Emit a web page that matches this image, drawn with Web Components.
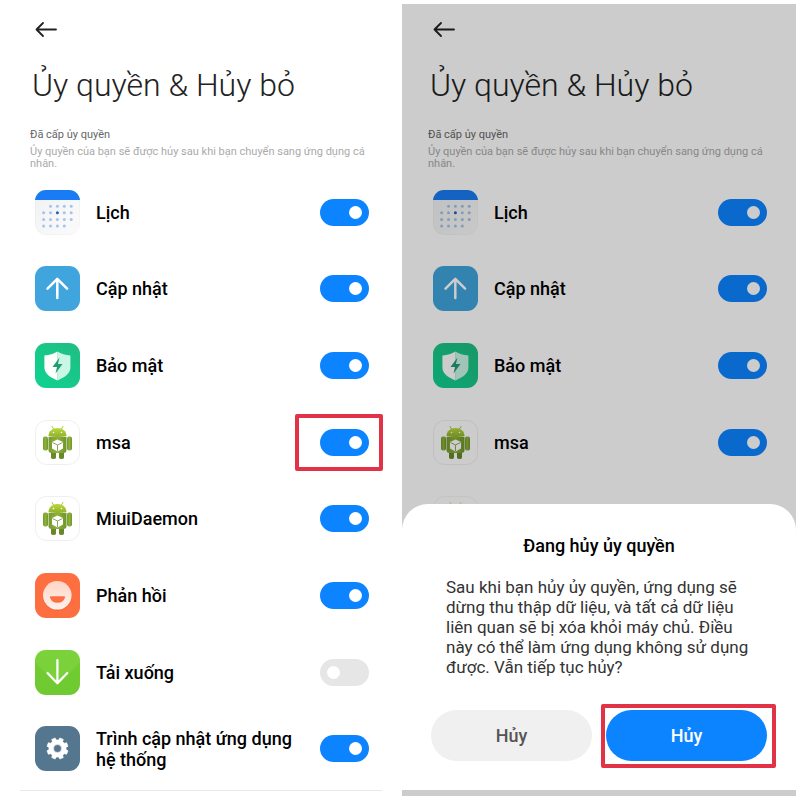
<!DOCTYPE html>
<html lang="vi">
<head>
<meta charset="utf-8">
<meta name="viewport" content="width=device-width, initial-scale=1">
<title>Ủy quyền &amp; Hủy bỏ</title>
<style>
  body { margin: 0; background: #fff; font-family: Roboto, "Noto Sans", sans-serif; color: #000; }
  .pair { display: grid; grid-template-columns: 1fr 1fr; gap: 4px; padding: 4px; min-height: 100vh; box-sizing: border-box; }
</style>
</head>
<body>
<main class="pair">
  <permission-screen divider>
    <app-row name="Lịch" icon="calendar" checked></app-row>
    <app-row name="Cập nhật" icon="update" checked></app-row>
    <app-row name="Bảo mật" icon="security" checked></app-row>
    <app-row name="msa" icon="android" checked marked></app-row>
    <app-row name="MiuiDaemon" icon="android" checked></app-row>
    <app-row name="Phản hồi" icon="feedback" checked></app-row>
    <app-row name="Tải xuống" icon="download"></app-row>
    <app-row name="Trình cập nhật ứng dụng hệ thống" icon="gear" checked></app-row>
  </permission-screen>
  <permission-screen dimmed>
    <app-row name="Lịch" icon="calendar" checked></app-row>
    <app-row name="Cập nhật" icon="update" checked></app-row>
    <app-row name="Bảo mật" icon="security" checked></app-row>
    <app-row name="msa" icon="android" checked></app-row>
    <app-icon class="peek" name="android"></app-icon>
    <confirm-sheet slot="sheet" heading="Đang hủy ủy quyền">
      Sau khi bạn hủy ủy quyền, ứng dụng sẽ dừng thu thập dữ liệu, và tất cả dữ liệu liên quan sẽ bị xóa khỏi máy chủ. Điều này có thể làm ứng dụng không sử dụng được. Vẫn tiếp tục hủy?
      <pill-button slot="actions">Hủy</pill-button>
      <pill-button slot="actions" primary marked>Hủy</pill-button>
    </confirm-sheet>
  </permission-screen>
</main>
<script>
const gearPath = () => {
  let d = '';
  for (let i = 0; i < 8; i++) {
    [[-15, 8.6], [-10, 10.8], [10, 10.8], [15, 8.6]].forEach(([off, r], k) => {
      const a = (i * 45 + 22.5 + off) * Math.PI / 180;
      d += (i || k ? 'L' : 'M') + (22.5 + r * Math.cos(a)).toFixed(2) + ' ' + (22.5 + r * Math.sin(a)).toFixed(2);
    });
  }
  return d + 'Z';
};
const dots = [[1, 2, 3, 4], [0, 1, 2, 3, 4], [0, 1, 2, 3, 4], [0, 1, 2, 3]]
  .map((cols, r) => cols.map(c => `<circle cx="${8.6 + c * 6.9}" cy="${16.2 + r * 6.6}" r="1.5" fill="${r === 1 && c === 2 ? '#1f5fb8' : '#a6c3ea'}"/>`).join('')).join('');

const icons = {
  calendar: `<defs><linearGradient id="g" x2="1" y2="1"><stop stop-color="#f0f1f3"/><stop offset="1" stop-color="#fbfbfb"/></linearGradient><clipPath id="c"><rect width="45" height="45" rx="11"/></clipPath></defs>
    <g clip-path="url(#c)"><path d="M0 0h45v45H0z" fill="url(#g)"/><path d="M0 0h45v10H0z" fill="#1a7cf4"/></g>
    <rect x=".5" y=".5" width="44" height="44" rx="10.5" fill="none" stroke="#000" stroke-opacity=".02"/>${dots}`,
  update: `<rect width="45" height="45" rx="11" fill="#40a4dd"/><path d="M22.3 32V13M12.5 22.7l9.8-9.8 9.8 9.8" fill="none" stroke="#fff" stroke-width="2.5" stroke-linecap="round" stroke-linejoin="round"/>`,
  security: `<defs><linearGradient id="g" x1="1" x2="0" y2="1"><stop stop-color="#20bd82"/><stop offset="1" stop-color="#0ed391"/></linearGradient></defs><rect width="45" height="45" rx="11" fill="url(#g)"/>
    <path d="M22.4 8.5c3.5 2.3 8 3.800 13 4v12c0 6-6 10-13 13z" fill="#c9f6e5"/><path d="M22.4 8.5c-3.5 2.3-8 3.800-13 4v12c0 6 6 10 13 13z" fill="#fff"/>
    <path d="M24.5 14.5l-7 9.5h4.5L20.5 30.5l7-9.5h-4.6z" fill="#219c73"/>`,
  android: `<defs><linearGradient id="h" x2="0" y2="1"><stop stop-color="#bcd93c"/><stop offset="1" stop-color="#8db02c"/></linearGradient><linearGradient id="b"><stop stop-color="#769a30"/><stop offset=".5" stop-color="#8db238"/><stop offset="1" stop-color="#6f942b"/></linearGradient></defs>
    <rect x=".5" y=".5" width="44" height="44" rx="11" fill="#fff" stroke="#efefef"/>
    <path d="M17 6.500l2.500 4M28 6.500L25.500 10.500" stroke="#a5c43a" stroke-width="1" stroke-linecap="round"/>
    <rect x="8" y="16.500" width="5" height="14" rx="2" fill="url(#b)"/><rect x="32" y="16.500" width="5" height="14" rx="2" fill="url(#b)"/>
    <path d="M16 28h5v9.500q0 1.500-2.500 1.500T16 37.500zM24 28h5v9.500q0 1.500-2.500 1.500T24 37.500z" fill="#67892a"/>
    <path d="M13.500 17h18v13q0 3-3 3h-12q-3 0-3-3z" fill="url(#b)"/>
    <path d="M13.500 16.300c0-5.300 4-8.300 9-8.300s9 3 9 8.300q-9 1.500-18 0z" fill="url(#h)"/>
    <circle cx="18.500" cy="12.500" r=".8" fill="#fff"/><circle cx="26.500" cy="12.500" r=".8" fill="#fff"/>
    <path d="M22.500 19.500l5.500 2.500v6.500l-5.500 3-5.500-3V22z" fill="#fff"/><path d="M17.500 22.500l5 2.500 5-2.500M22.500 25v6" stroke="#8da25e" stroke-width="1" fill="none"/>`,
  feedback: `<defs><linearGradient id="g" x2="0" y2="1"><stop stop-color="#ffd5c5"/><stop offset="1" stop-color="#fff1ec"/></linearGradient></defs><rect width="45" height="45" rx="11" fill="#fd6e40"/>
    <circle cx="22.300" cy="23.300" r="14.600" fill="#ed5c30" opacity=".5"/><circle cx="22.300" cy="22.300" r="14.300" fill="url(#g)"/><path d="M16 23.200h13q1.300 0 1 1.300a7.800 7.300 0 0 1-15 0q-.3-1.300 1-1.300z" fill="#fb7044"/>`,
  download: `<defs><linearGradient id="g" x2="0" y2="1"><stop stop-color="#72cc31"/><stop offset="1" stop-color="#6fca31"/></linearGradient></defs><rect width="45" height="45" rx="11" fill="url(#g)"/>
    <path d="M0 11Q0 0 11 0h23q11 0 11 11v1L25 33q-2.500 2-5 0L0 12z" fill="#8bdc4c" opacity=".35"/>
    <path d="M22.400 10v23M12.500 23l9.900 10.300L32.300 23" fill="none" stroke="#fff" stroke-width="2.200" stroke-linecap="round" stroke-linejoin="round"/>`,
  gear: `<rect width="45" height="45" rx="11" fill="#54768f"/><path fill-rule="evenodd" fill="#fff" stroke="#fff" stroke-width=".6" stroke-linejoin="round" d="${gearPath()}M26.500 22.500a4 4 0 1 0-8 0a4 4 0 1 0 8 0z"/>`
};

customElements.define('app-icon', class extends HTMLElement {
  connectedCallback() {
    if (this.shadowRoot) return;
    this.attachShadow({ mode: 'open' }).innerHTML = `
      <style>:host{display:block;flex:none;width:45px;height:45px} svg{display:block;width:100%;height:100%}</style>
      <svg viewBox="0 0 45 45" aria-hidden="true">${icons[this.getAttribute('name')]}</svg>`;
  }
});

customElements.define('app-row', class extends HTMLElement {
  connectedCallback() {
    if (this.shadowRoot) return;
    this.attachShadow({ mode: 'open' }).innerHTML = `
      <style>
        :host{display:flex;align-items:center;gap:16px;padding:0 29px 0 31px}
        label{flex:1;font-size:18px;line-height:21px;font-weight:500}
        .control{position:relative;display:flex}
        input{appearance:none;margin:0;width:49px;height:27px;padding:7px;box-sizing:border-box;border-radius:14px;background:#e6e6e6;display:flex;cursor:pointer}
        input::before{content:"";width:13px;height:13px;border-radius:50%;background:#fff}
        input:checked{background:#0d84ff;justify-content:flex-end}
        :host([marked]) .control::after{content:"";position:absolute;inset:-15px -14px -15px -25px;border:4px solid #e23246;border-radius:2px;pointer-events:none}
      </style>
      <app-icon name="${this.getAttribute('icon')}"></app-icon>
      <label for="s">${this.getAttribute('name')}</label>
      <span class="control"><input id="s" type="checkbox" role="switch" ${this.hasAttribute('checked') ? 'checked' : ''}></span>`;
  }
});

customElements.define('pill-button', class extends HTMLElement {
  connectedCallback() {
    if (this.shadowRoot) return;
    this.attachShadow({ mode: 'open' }).innerHTML = `
      <style>
        :host{display:block;flex:1;position:relative}
        button{display:block;width:100%;height:51px;border:0;border-radius:26px;background:#f0f0f0;color:#555;font:500 18px/21px Roboto,"Noto Sans",sans-serif;cursor:pointer}
        :host([primary]) button{background:#0d84ff;color:#fff}
        :host([marked])::after{content:"";position:absolute;inset:-6px -9px -7px -5px;border:4px solid #e23246;border-radius:2px;pointer-events:none}
      </style>
      <button type="button"><slot></slot></button>`;
  }
});

customElements.define('confirm-sheet', class extends HTMLElement {
  connectedCallback() {
    if (this.shadowRoot) return;
    this.attachShadow({ mode: 'open' }).innerHTML = `
      <style>
        :host{display:block;background:#fff;border-radius:26px 26px 0 0;padding:31px 29px 29px}
        h2{margin:0;font-size:18px;line-height:21px;font-weight:500;text-align:center}
        p{margin:21px 15px 33px;font-size:17px;line-height:20px;color:#333}
        .actions{display:flex;gap:14px}
      </style>
      <section role="dialog" aria-labelledby="t">
        <h2 id="t">${this.getAttribute('heading')}</h2>
        <p><slot></slot></p>
        <div class="actions"><slot name="actions"></slot></div>
      </section>`;
  }
});

customElements.define('permission-screen', class extends HTMLElement {
  connectedCallback() {
    if (this.shadowRoot) return;
    this.attachShadow({ mode: 'open' }).innerHTML = `
      <style>
        :host{display:flex;flex-direction:column;position:relative;overflow:hidden;background:#fff;box-sizing:border-box;padding-bottom:5px}
        header{padding:16px 26px 0}
        button{display:block;margin:0 0 0 5px;padding:0;border:0;background:none;cursor:pointer}
        svg{display:block}
        h1{margin:25px 2px 0;font-size:32px;line-height:40px;font-weight:300;color:#222}
        h2{margin:22px 0 0;font-size:11px;line-height:16px;font-weight:400;color:#666}
        p{margin:3px 0 0;font-size:11px;line-height:12px;color:#aaa}
        .list{flex:1;display:grid;grid-template-rows:repeat(8,1fr);margin:4px 0 3px}
        hr{width:auto;margin:0 16px;border:0;height:1px;background:transparent}
        :host([divider]) hr{background:#e9e9e9}
        ::slotted(.peek){align-self:center;margin-left:31px;opacity:.5}
        .scrim{display:none;position:absolute;inset:0;background:rgba(0,0,0,.2)}
        :host([dimmed]) .scrim{display:block}
        .sheet{position:absolute;left:0;right:0;bottom:6px}
      </style>
      <header>
        <button type="button" aria-label="Quay lại"><svg width="22" height="20" viewBox="0 0 22 20"><path d="M21 9.500H1.500M8 3L1.500 9.500 8 16" fill="none" stroke="#222" stroke-width="1.800" stroke-linecap="round" stroke-linejoin="round"/></svg></button>
        <h1>Ủy quyền &amp; Hủy bỏ</h1>
        <h2>Đã cấp ủy quyền</h2>
        <p>Ủy quyền của bạn sẽ được hủy sau khi bạn chuyển sang ứng dụng cá nhân.</p>
      </header>
      <div class="list"><slot></slot></div>
      <hr>
      <div class="scrim"></div>
      <div class="sheet"><slot name="sheet"></slot></div>`;
  }
});
</script>
</body>
</html>
